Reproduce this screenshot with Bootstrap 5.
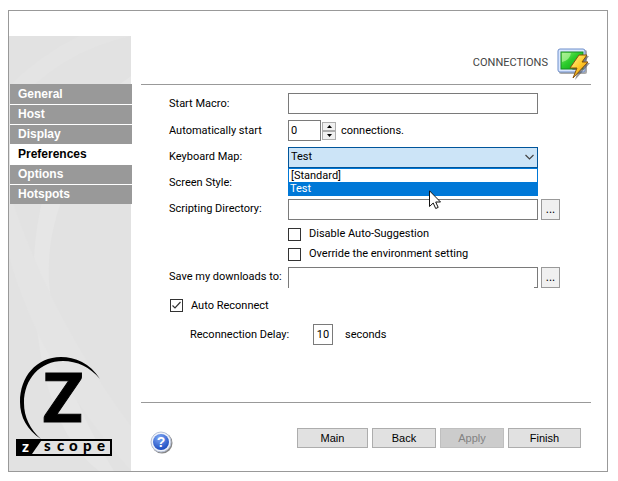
<!DOCTYPE html>
<html lang="en">
<head>
<meta charset="utf-8">
<meta name="viewport" content="width=device-width, initial-scale=1">
<title>Connections - Preferences</title>
<link href="https://cdn.jsdelivr.net/npm/bootstrap@5.3.0/dist/css/bootstrap.min.css" rel="stylesheet">
<style>
  body { font-family: Roboto, "Liberation Sans", sans-serif; font-size: 11px; line-height: 16px; color: #000; background: #fff; padding: 10px 10px 9px 8px; }
  .frame { border: 1px solid #999; padding-top: 25px; }
  .side { width: 122px; background: #e2e2e2; }
  .side-art { z-index: 0; }
  .side-nav { z-index: 1; margin-top: 48px; gap: 1px; padding-left: 1px; width: 123px; background: linear-gradient(90deg, transparent 1px, #fff 1px); }
  .side-nav a { display: block; height: 19px; padding-left: 8px; background: #999; color: #fff; font: bold 12px/19px "Liberation Sans", sans-serif; text-decoration: none; }
  .side-nav a:first-child { height: 20px; line-height: 21px; }
  .side-nav a.active { background: #fff; color: #000; }
  .brand { z-index: 1; margin: 0 0 13px 5px; }
  .main { margin-left: 10px; margin-right: 16px; }
  .top { height: 49px; border-bottom: 1px solid #999; }
  .top h1 { font-size: 11px; line-height: 16px; color: #444; font-weight: 400; margin: 6px 9px 0 0; }
  .settings { padding: 5px 31px 0 28px; }
  .line { display: grid; grid-template-columns: 119px 1fr 22px; align-items: center; height: 27px; }
  .line-tight { height: 26px; }
  .gap-above { margin-top: 2px; }
  .tick-line { height: 20px; padding-left: 119px; }
  .box { height: 21px; width: 100%; border: 1px solid #7a7a7a; border-radius: 0; background: #fff; padding: 0 2px; font-size: 11px; color: #000; }
  .box-open { border-bottom: 0; background: linear-gradient(#7a7a7a, #7a7a7a) right bottom / 3px 1px no-repeat #fff; }
  .spin-box { width: 33px; }
  .spin-steps { margin: 0 5px 0 1px; }
  .delay-box { width: 20px; padding: 0; text-align: center; }
  .step { width: 14px; height: 9px; border: 1px solid #adadad; background: #f0f0f0; }
  .pick { appearance: none; background: #cce4f7; border-color: #00559b; display: block; }
  .pick-arrow { right: 4px; top: 7px; pointer-events: none; }
  .choices { top: 21px; left: 0; right: 0; z-index: 5; border: 1px solid #0078d7; background: #fff; line-height: 13px; }
  .choices li { padding-left: 2px; height: 13px; }
  .choices li.on { background: #0078d7; color: #fff; padding-left: 1px; }
  .pointer { left: 141px; top: 43px; z-index: 6; }
  .more { width: 19px; height: 21px; border: 1px solid #999; background: #f0f0f0; border-radius: 0; font-size: 12px; }
  .tick { appearance: none; width: 13px; height: 13px; border: 1px solid #333; background: #fff; margin: 0; flex: none; }
  .tick:checked { background: url("data:image/svg+xml,%3Csvg xmlns='http://www.w3.org/2000/svg' viewBox='0 0 11 11'%3E%3Cpath d='M1.5 5.5l2.5 2.5 5.5-6' fill='none' stroke='%23333' stroke-width='1.2'/%3E%3C/svg%3E"); }
  .auto-line { padding-left: 1px; }
  .delay { padding-left: 21px; }
  .delay label { width: 123px; }
  .foot { height: 69px; border-top: 1px solid #999; padding: 25px 10px 0 9px; }
  .cmd { height: 20px; border: 1px solid #adadad; border-radius: 0; background: #e1e1e1; color: #000; font: 11px/16px "Liberation Sans", sans-serif; padding: 0; width: 64px; }
  .cmd:disabled { background: #ccc; border-color: #bfbfbf; color: #838383; opacity: 1; }
  .cmd-main { width: 71px; }
  .cmd-end { width: 73px; }
  .help { width: 24px; height: 24px; }
</style>
<script src="https://cdn.jsdelivr.net/npm/bootstrap@5.3.0/dist/js/bootstrap.bundle.min.js"></script>
</head>
<body class="d-flex min-vh-100">
<div class="frame d-flex flex-grow-1">
  <aside class="side position-relative d-flex flex-column flex-shrink-0">
    <svg class="side-art position-absolute top-0 start-0 w-100 h-100" viewBox="0 0 122 435" preserveAspectRatio="none" aria-hidden="true">
      <path d="M0 50Q30 20 70 0H122Q50 15 0 75Z" fill="#e4e4e4"/>
      <path d="M122 40Q20 110 25 250T90 435H105Q45 340 40 245T122 60Z" fill="#e6e6e6"/>
      <path d="M0 155Q40 280 122 390V435Q30 330 0 220Z" fill="#e4e4e4"/>
    </svg>
    <nav class="side-nav position-relative d-flex flex-column" aria-label="Sections">
      <a href="#">General</a>
      <a href="#">Host</a>
      <a href="#">Display</a>
      <a href="#" class="active" aria-current="page">Preferences</a>
      <a href="#">Options</a>
      <a href="#">Hotspots</a>
    </nav>
    <svg class="brand position-relative mt-auto" width="100" height="103" viewBox="0 0 100 103" role="img" aria-label="z/scope">
      <path d="M86 24C76 8 61 2 47 2C22 2 6 22 6 47C6 62 13 75 27 84C16 74 10 62 10 48C10 24 26 6 49 6C63 6 76 12 86 24Z"/>
      <text x="29" y="67" font-family="Lato, sans-serif" font-weight="900" font-size="66" stroke="#000">Z</text>
      <rect x="2" y="84" width="96" height="17"/>
      <path d="M27 86H96V99H18Z" fill="#e2e2e2"/>
      <g font-family="Lato, sans-serif" font-weight="900" font-size="15">
        <text x="8" y="97" fill="#fff">z</text>
        <text x="30 43 55 69 83" y="96">scope</text>
      </g>
    </svg>
  </aside>

  <main class="main flex-grow-1 d-flex flex-column">
    <header class="top d-flex justify-content-end align-items-center">
      <h1>CONNECTIONS</h1>
      <svg class="mt-2" width="34" height="34" viewBox="0 0 34 34" aria-hidden="true">
        <defs>
          <linearGradient id="scr" x1="0" y1="0" x2="1" y2="1"><stop offset="0" stop-color="#8fee70"/><stop offset=".45" stop-color="#2ccc2c"/><stop offset="1" stop-color="#079f12"/></linearGradient>
          <linearGradient id="zap" x1="0" y1="0" x2="1" y2="1"><stop offset="0" stop-color="#fff59a"/><stop offset=".5" stop-color="#ffc928"/><stop offset="1" stop-color="#d77b12"/></linearGradient>
        </defs>
        <rect x="2" y="3" width="28" height="24" rx="2" fill="#aaa"/>
        <rect x="1" y="2" width="27" height="23" rx="2" fill="#d9e6ff" stroke="#6f8fca"/>
        <rect x="4" y="5" width="22" height="17" fill="url(#scr)" stroke="#168b20"/>
        <path d="M5 6H14Q13 13 5 15Z" fill="#c5f9ae" opacity=".6"/>
        <path d="M24 8L31 8L26 15L32 15L17 32L20 22H14Z" transform="translate(1 1)" fill="#555" opacity=".6"/>
        <path d="M22 8L30 8L25 15L31 15L16 31L20 21H13Z" fill="url(#zap)" stroke="#86500d"/>
      </svg>
    </header>

    <form class="settings">
      <div class="line">
        <label for="macro">Start Macro:</label>
        <input id="macro" type="text" class="box">
      </div>
      <div class="line">
        <label for="count">Automatically start</label>
        <div class="d-flex align-items-center">
          <input id="count" type="text" class="box spin-box" value="0">
          <div class="d-flex flex-column spin-steps">
            <button type="button" class="step p-0 d-flex align-items-center justify-content-center" aria-label="Increase"><svg width="5" height="3" viewBox="0 0 5 3"><path d="M0 3L2.500 0L5 3Z"/></svg></button>
            <button type="button" class="step p-0 d-flex align-items-center justify-content-center" aria-label="Decrease"><svg width="5" height="3" viewBox="0 0 5 3"><path d="M0 0L2.500 3L5 0Z"/></svg></button>
          </div>
          <span>connections.</span>
        </div>
      </div>
      <div class="line line-tight">
        <label for="keymap">Keyboard Map:</label>
        <div class="position-relative">
          <select id="keymap" class="box pick"><option>[Standard]</option><option selected>Test</option></select>
          <svg class="pick-arrow position-absolute" width="9" height="7" viewBox="0 0 9 7" aria-hidden="true"><path d="M.5 1L4.500 5L8.500 1" fill="none" stroke="#444" stroke-width="1.200"/></svg>
          <ul class="choices position-absolute list-unstyled m-0">
            <li>[Standard]</li>
            <li class="on">Test</li>
          </ul>
          <svg class="pointer position-absolute" width="13" height="21" viewBox="0 0 13 21" aria-hidden="true"><path d="M.5.8V16.500L4.200 13L6.700 18.500L9.200 17.400L6.700 12H11.500Z" fill="#fff" stroke="#111"/></svg>
        </div>
      </div>
      <div class="line line-tight">
        <span>Screen Style:</span>
      </div>
      <div class="line line-tight">
        <label for="scripts">Scripting Directory:</label>
        <input id="scripts" type="text" class="box">
        <button type="button" class="more p-0 ms-auto" aria-label="Browse scripting directory">...</button>
      </div>
      <div class="tick-line gap-above d-flex align-items-center">
        <input id="nosuggest" type="checkbox" class="tick"><label for="nosuggest" class="ms-2">Disable Auto-Suggestion</label>
      </div>
      <div class="tick-line d-flex align-items-center">
        <input id="override" type="checkbox" class="tick"><label for="override" class="ms-2">Override the environment setting</label>
      </div>
      <div class="line line-tight">
        <label for="downloads">Save my downloads to:</label>
        <input id="downloads" type="text" class="box box-open">
        <button type="button" class="more p-0 ms-auto" aria-label="Browse download folder">...</button>
      </div>
      <div class="line gap-above auto-line d-flex">
        <input id="auto" type="checkbox" class="tick" checked><label for="auto" class="ms-2">Auto Reconnect</label>
      </div>
      <div class="line gap-above d-flex delay">
        <label for="delay">Reconnection Delay:</label>
        <input id="delay" type="text" class="box delay-box" value="10">
        <span class="ms-2 ps-1">seconds</span>
      </div>
    </form>

    <footer class="foot mt-auto d-flex align-items-start">
      <a href="#" class="help me-auto" aria-label="Help">
        <svg class="d-block" width="24" height="26" viewBox="0 0 24 26">
          <defs><radialGradient id="ball" cx=".4" cy=".25" r=".8"><stop offset="0" stop-color="#7fa8f5"/><stop offset="1" stop-color="#1746bd"/></radialGradient></defs>
          <circle cx="12" cy="15" r="10.500" fill="#888"/>
          <circle cx="11" cy="14" r="10" fill="#eef2fa" stroke="#b8c2d8"/>
          <circle cx="11" cy="14" r="8" fill="url(#ball)"/>
          <text x="11" y="19" text-anchor="middle" font-family="Liberation Sans, sans-serif" font-weight="700" font-size="14" fill="#fff">?</text>
        </svg>
      </a>
      <div class="d-flex gap-1">
        <button type="button" class="cmd cmd-main">Main</button>
        <button type="button" class="cmd">Back</button>
        <button type="button" class="cmd" disabled>Apply</button>
        <button type="submit" class="cmd cmd-end">Finish</button>
      </div>
    </footer>
  </main>
</div>
</body>
</html>
